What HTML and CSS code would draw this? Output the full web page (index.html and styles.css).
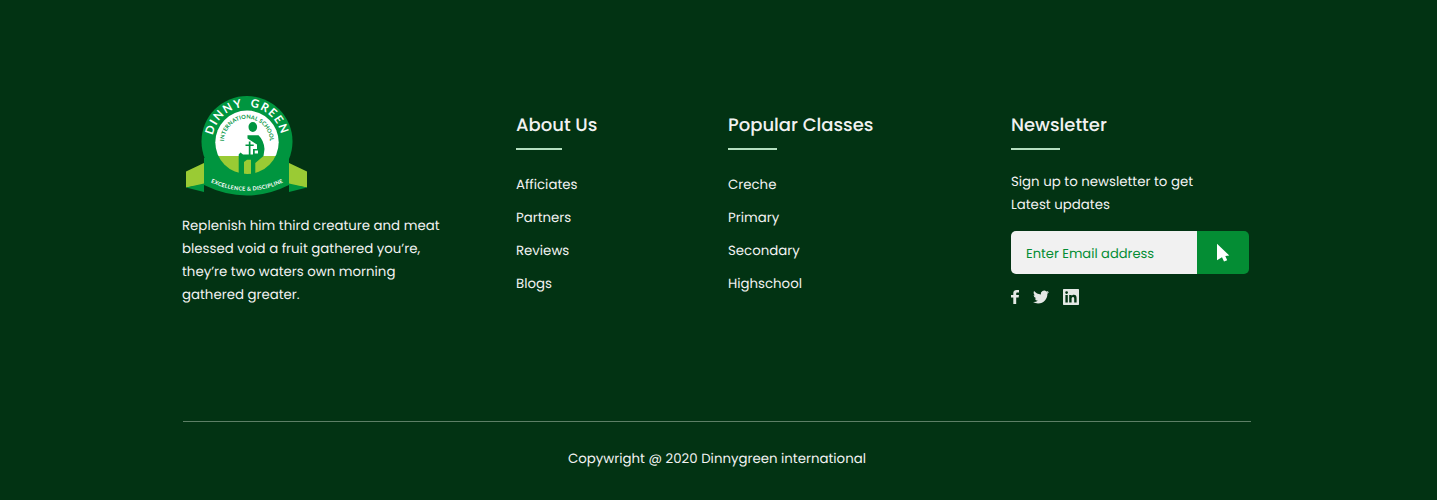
FILE: index.html
```html
<!DOCTYPE html>
<html lang="en">
<head>
<meta charset="utf-8">
<title>Dinnygreen International</title>
<link rel="stylesheet" href="styles.css">
</head>
<body>
<footer class="footer">
  <div class="columns">
    <section class="brand">
      <svg class="logo" viewBox="182 92 128 108" width="128" height="108" role="img" aria-label="Dinny Green International School">
        <defs>
          <path id="arc-name" d="M247 176.200A34.700 34.700 0 1 1 247.010 176.200"/>
          <path id="arc-school" d="M247 164.500A22.900 22.900 0 1 1 247.010 164.500"/>
          <path id="arc-motto" d="M209 181.500Q247 200 285 181.500"/>
          <clipPath id="disc"><circle cx="247" cy="142.300" r="31.700"/></clipPath>
        </defs>
        <path class="lime" d="M186 171.500L205 162.500V184.500L186 187.500zM307 171.500L288 162.500V184.500L307 187.500z"/>
        <path class="green" d="M186 187.500L204 183.500V192zM307 187.500L289 183.500V192z"/>
        <path class="green" d="M204 158H289V185Q247 206 204 185z"/>
        <circle class="green" cx="247" cy="141.500" r="45.500"/>
        <g clip-path="url(#disc)">
          <path class="white" d="M215 110h64v46h-64z"/>
          <path class="lime" d="M215 156h64v19h-64z"/>
        </g>
        <g class="green">
          <ellipse cx="252.800" cy="127" rx="4.300" ry="4.900"/>
          <path fill-rule="evenodd" d="M247.500 135.200H258.500Q264 140.500 264.500 149L263.500 156L255.300 163V174H251V159.700H247L244 162V174H238.700V154.500L240.500 152.500L243 154.500H253V149H257V144.500L253 142L247.500 138.500zM254.700 150.500V153.500H258V150.500z"/>
          <path d="M248.800 141.500h1.700v3h3.200v1.600h-3.200v9h-1.700v-9h-3.300v-1.600h3.300z"/>
        </g>
        <text class="logo-name"><textPath href="#arc-name" startOffset="50%" text-anchor="middle">DINNY GREEN</textPath></text>
        <text class="logo-school"><textPath href="#arc-school" startOffset="50%" text-anchor="middle" textLength="71">INTERNATIONAL SCHOOL</textPath></text>
        <text class="logo-motto"><textPath href="#arc-motto" startOffset="50%" text-anchor="middle" textLength="75">EXCELLENCE &amp; DISCIPLINE</textPath></text>
      </svg>
      <p class="about">Replenish him third creature and meat<br>blessed void a fruit gathered you’re,<br>they’re two waters own morning<br>gathered greater.</p>
    </section>
    <nav class="links links-about">
      <h2 class="title">About Us</h2>
      <ul class="list"><li>Afficiates</li><li>Partners</li><li>Reviews</li><li>Blogs</li></ul>
    </nav>
    <nav class="links links-classes">
      <h2 class="title">Popular Classes</h2>
      <ul class="list"><li>Creche</li><li>Primary</li><li>Secondary</li><li>Highschool</li></ul>
    </nav>
    <section class="newsletter">
      <h2 class="title">Newsletter</h2>
      <p class="signup">Sign up to newsletter to get<br>Latest updates</p>
      <form class="form">
        <input class="email" type="text" placeholder="Enter Email address" aria-label="Email">
        <button class="send" type="button" aria-label="Subscribe">
          <svg width="14" height="20" viewBox="0 0 14 20"><path class="white" d="M1 .8L13.300 12.500L9.300 12.900L11.200 17.200L8 18.500L6 14.200L1 17.200z"/></svg>
        </button>
      </form>
      <div class="social">
        <svg width="8" height="16" viewBox="0 0 8 16"><path d="M2.300 15V8.500H0V6h2.300V4.100C2.300 2 3.700 1 5.600 1H8v2.500H6.500C5.500 3.500 5.200 4 5.200 4.700V6H8l-.4 2.500H5.200V15z"/></svg>
        <svg width="16" height="16" viewBox="0 0 24 24"><path d="M23.953 4.570a10 10 0 01-2.825.775 4.958 4.958 0 002.163-2.723 9.900 9.900 0 01-3.127 1.184 4.920 4.920 0 00-8.384 4.482C7.690 8.095 4.067 6.130 1.640 3.162a4.822 4.822 0 00-.666 2.475c0 1.710.870 3.213 2.188 4.096a4.904 4.904 0 01-2.228-.616v.060a4.923 4.923 0 003.946 4.827 4.996 4.996 0 01-2.212.085 4.936 4.936 0 004.604 3.417 9.867 9.867 0 01-6.102 2.105c-.390 0-.779-.023-1.170-.067a13.995 13.995 0 007.557 2.209c9.053 0 13.998-7.496 13.998-13.985 0-.210 0-.420-.015-.630A9.935 9.935 0 0024 4.590z"/></svg>
        <svg width="16" height="16" viewBox="0 0 16 16"><path fill-rule="evenodd" d="M.7 0h14.600a.7.7 0 0 1 .7.7v14.600a.7.7 0 0 1-.7.7H.7a.7.7 0 0 1-.7-.7V.7a.7.7 0 0 1 .7-.7zM2.400 6v7.600h2.400V6zM3.600 2.200a1.400 1.400 0 1 0 0 2.800 1.400 1.400 0 0 0 0-2.800zM6.200 6v7.600h2.400V9.900c0-1 .2-2 1.400-2s1.200 1.100 1.200 2v3.700h2.400V9.400c0-2-.4-3.600-2.800-3.600-1.100 0-1.900.6-2.200 1.200V6z"/></svg>
      </div>
    </section>
  </div>
  <p class="copyright">Copywright @ 2020 Dinnygreen international</p>
</footer>
</body>
</html>
```
FILE: styles.css
```css
* { box-sizing: border-box; margin: 0; padding: 0; }
body { background: #023313; }
.footer {
  height: 500px;
  padding: 92px 186px 0 183px;
  background: #023313;
  color: #f1f1f1;
  font-family: Poppins, Inter, "Open Sans", sans-serif;
  font-size: 13.33px;
  line-height: 23px;
  text-rendering: geometricPrecision;
}
.columns { display: grid; grid-template-columns: 333px 212px 283px 240px; height: 330px; border-bottom: 1px solid #5d7f66; }
.logo { display: block; margin-left: -1px; }
.green { fill: #00953f; }
.lime { fill: #9acb34; }
.white { fill: #fff; }
.logo-name, .logo-school, .logo-motto { font-family: Lato, sans-serif; font-weight: 700; }
.logo-name { fill: #fff; font-size: 11.5px; letter-spacing: 1.5px; word-spacing: 2.5px; }
.logo-school { fill: #00953f; font-size: 5.6px; }
.logo-motto { fill: #fff; font-size: 5.5px; }
.about { margin: 14px 0 0 -1px; white-space: nowrap; }
.links, .newsletter { padding-top: 20px; }
.title { font-size: 18px; font-weight: 500; line-height: 28px; white-space: nowrap; }
.title::after { content: ""; display: block; width: 49px; height: 2px; margin-top: 8px; background: #b5dfc0; }
.links-about .title::after { width: 46px; }
.list { margin-top: 23px; list-style: none; }
.list li { height: 33px; }
.signup { margin-top: 20px; }
.form { display: flex; width: 238px; height: 43px; margin-top: 15px; border-radius: 5px; overflow: hidden; }
.email { width: 186px; border: 0; padding: 2px 0 0 15px; background: #f1f1f1; font: inherit; font-size: 13.05px; text-rendering: inherit; }
.email::placeholder { color: #048d34; opacity: 1; }
.send { display: flex; align-items: center; justify-content: center; width: 52px; border: 0; background: #048d34; }
.social { display: flex; gap: 14px; margin-top: 15px; fill: #e4e8e5; }
.copyright { margin-top: 25px; text-align: center; }
```
